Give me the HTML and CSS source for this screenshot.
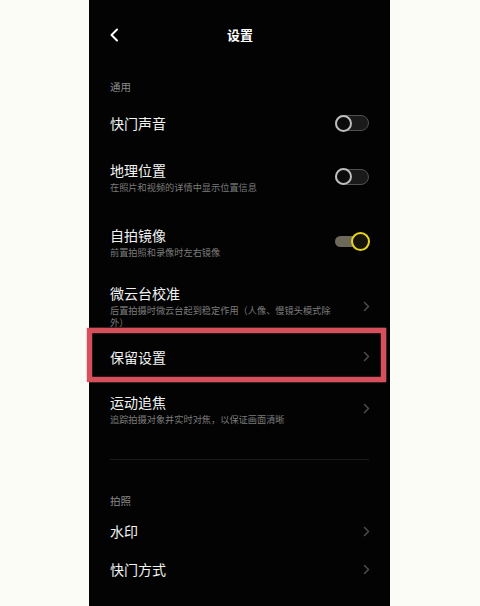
FILE: index.html
```html
<!DOCTYPE html>
<html lang="zh-CN">
<head>
<meta charset="utf-8">
<title>设置</title>
<link rel="stylesheet" href="styles.css">
</head>
<body>
<div class="phone">
  <header class="topbar">
    <svg class="back" width="10" height="14" viewBox="0 0 10 14"><path d="M8 1.5 L2.5 7 L8 12.5" fill="none" stroke="#fff" stroke-width="2" stroke-linecap="round" stroke-linejoin="round"/></svg>
    <h1 class="title">设置</h1>
    <span></span>
  </header>

  <div class="label label--first">通用</div>

  <div class="row row--first">
    <div class="text"><div class="name">快门声音</div></div>
    <span class="switch"><span class="knob"></span></span>
  </div>

  <div class="row row--m28">
    <div class="text"><div class="name">地理位置</div><div class="sub">在照片和视频的详情中显示位置信息</div></div>
    <span class="switch"><span class="knob"></span></span>
  </div>

  <div class="row row--m33">
    <div class="text"><div class="name">自拍镜像</div><div class="sub">前置拍照和录像时左右镜像</div></div>
    <span class="switch switch--on"><span class="knob"></span></span>
  </div>

  <div class="row row--m26">
    <div class="text"><div class="name">微云台校准</div><div class="sub">后置拍摄时微云台起到稳定作用（人像、慢镜头模式除外）</div></div>
    <svg class="chev" width="7" height="11" viewBox="0 0 7 11"><path d="M1.5 1.5 L5.5 5.5 L1.5 9.5" fill="none" stroke="#4a4a4a" stroke-width="1.6" stroke-linecap="round" stroke-linejoin="round"/></svg>
  </div>

  <div class="row row--m19">
    <div class="text"><div class="name">保留设置</div></div>
    <svg class="chev" width="7" height="11" viewBox="0 0 7 11"><path d="M1.5 1.5 L5.5 5.5 L1.5 9.5" fill="none" stroke="#4a4a4a" stroke-width="1.6" stroke-linecap="round" stroke-linejoin="round"/></svg>
    <span class="highlight"></span>
  </div>

  <div class="row row--m27">
    <div class="text"><div class="name">运动追焦</div><div class="sub">追踪拍摄对象并实时对焦，以保证画面清晰</div></div>
    <svg class="chev" width="7" height="11" viewBox="0 0 7 11"><path d="M1.5 1.5 L5.5 5.5 L1.5 9.5" fill="none" stroke="#4a4a4a" stroke-width="1.6" stroke-linecap="round" stroke-linejoin="round"/></svg>
  </div>

  <div class="divider"></div>

  <div class="label label--second">拍照</div>

  <div class="row row--m15">
    <div class="text"><div class="name">水印</div></div>
    <svg class="chev" width="7" height="11" viewBox="0 0 7 11"><path d="M1.5 1.5 L5.5 5.5 L1.5 9.5" fill="none" stroke="#4a4a4a" stroke-width="1.6" stroke-linecap="round" stroke-linejoin="round"/></svg>
  </div>

  <div class="row row--m20">
    <div class="text"><div class="name">快门方式</div></div>
    <svg class="chev" width="7" height="11" viewBox="0 0 7 11"><path d="M1.5 1.5 L5.5 5.5 L1.5 9.5" fill="none" stroke="#4a4a4a" stroke-width="1.6" stroke-linecap="round" stroke-linejoin="round"/></svg>
  </div>
</div>
</body>
</html>
```

FILE: styles.css
```css
* { box-sizing: border-box; }

html, body {
  margin: 0;
  padding: 0;
  background: #fcfcf7;
}

body {
  width: 480px;
  height: 606px;
  overflow: hidden;
  font-family: "Noto Sans CJK SC", "Noto Sans", sans-serif;
}

.phone {
  margin-left: 89px;
  width: 301px;
  height: 606px;
  background: #030303;
  padding: 0 21px;
  display: flex;
  flex-direction: column;
}

.topbar {
  height: 70px;
  display: grid;
  grid-template-columns: 1fr auto 1fr;
  align-items: center;
}

.back { display: block; margin-left: -1px; }

.title {
  margin: 0;
  font-size: 13px;
  font-weight: 700;
  color: #fff;
  line-height: 18px;
  padding-left: 1px;
}

.label {
  font-size: 10.5px;
  line-height: 14px;
  color: #8a8a8a;
}
.label--first { margin-top: 9.5px; }
.label--second { margin-top: 33.5px; }

.row {
  display: flex;
  align-items: center;
  justify-content: space-between;
  position: relative;
}
.row--first { margin-top: 20.5px; }
.row--m28 { margin-top: 28.5px; }
.row--m33 { margin-top: 33px; }
.row--m26 { margin-top: 26.5px; }
.row--m19 { margin-top: 19.5px; }
.row--m27 { margin-top: 27px; }
.row--m15 { margin-top: 14.5px; }
.row--m20 { margin-top: 20px; }

.text { width: 225px; }

.name {
  font-size: 14px;
  line-height: 18px;
  color: #f2f2f2;
}

.sub {
  margin-top: 2px;
  font-size: 9.2px;
  line-height: 12px;
  color: #7c7c7c;
}

.chev { display: block; margin-right: -1px; }

.switch {
  position: relative;
  width: 34px;
  height: 16px;
  border-radius: 8px;
  border: 1.5px solid #505050;
  background: #1a1a1a;
  flex: none;
}
.switch .knob {
  position: absolute;
  left: -1.5px;
  top: -1.5px;
  width: 17px;
  height: 17px;
  border-radius: 50%;
  border: 2px solid #bdbdbd;
  background: #0b0b0b;
}
.switch--on {
  border: none;
  height: 11px;
  background: #6c685a;
  width: 30px;
  margin-right: 4px;
}
.switch--on .knob {
  left: auto;
  right: -5px;
  top: -4px;
  width: 19px;
  height: 19px;
  border: 2.5px solid #e8d41e;
  background: #161408;
}

.divider {
  margin-top: 34.5px;
  height: 1px;
  background: #1c1c1c;
}

.highlight {
  position: absolute;
  left: -23px;
  right: -17px;
  top: -19.5px;
  bottom: -16.5px;
  border: 5px solid #d64f5b;
  box-shadow: 0 0 1.5px #e07a84, inset 0 0 1.5px #e07a84;
  pointer-events: none;
}
```
